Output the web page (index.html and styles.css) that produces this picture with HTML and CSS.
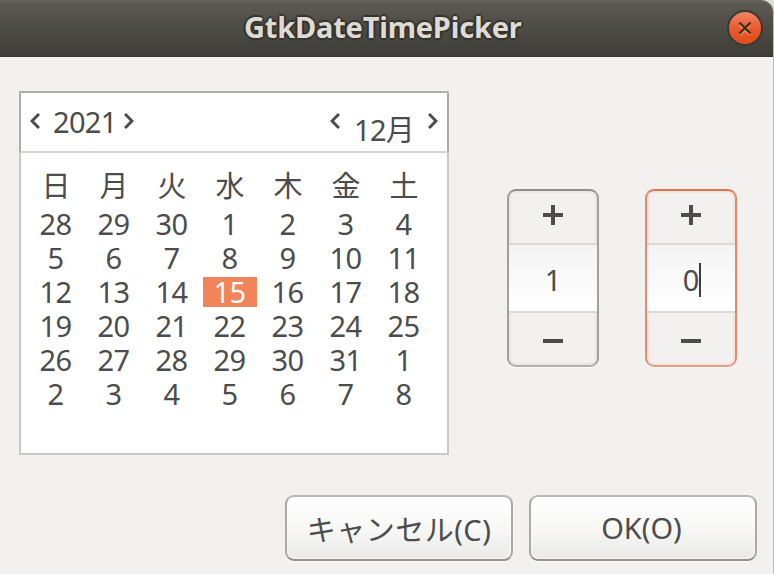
FILE: index.html
```html
<!DOCTYPE html>
<html lang="ja">
<head>
<meta charset="utf-8">
<title>GtkDateTimePicker</title>
<link rel="stylesheet" href="styles.css">
</head>
<body>
<div class="window">
  <header class="titlebar">
    <h1 class="title">GtkDateTimePicker</h1>
    <button class="close" aria-label="閉じる"><svg width="14" height="14" viewBox="0 0 14 14"><path class="close-glow" d="M2 4.5 12 14M12 4.5 2 14"/><path class="close-mark" d="M1.5 1.5 12.5 12.5M12.5 1.5 1.5 12.5"/></svg></button>
  </header>
  <main class="content">
    <section class="calendar">
      <div class="cal-header">
        <svg class="arrow" width="10" height="16" viewBox="0 0 10 16"><path d="M9 1 2 8 9 15"/></svg>
        <span class="year">2021</span>
        <svg class="arrow" width="10" height="16" viewBox="0 0 10 16"><path d="M1 1 8 8 1 15"/></svg>
        <svg class="arrow month-prev" width="10" height="16" viewBox="0 0 10 16"><path d="M9 1 2 8 9 15"/></svg>
        <span class="month">12月</span>
        <svg class="arrow" width="10" height="16" viewBox="0 0 10 16"><path d="M1 1 8 8 1 15"/></svg>
      </div>
      <div class="weekdays"><span>日</span><span>月</span><span>火</span><span>水</span><span>木</span><span>金</span><span>土</span></div>
      <div class="days">
        <span>28</span><span>29</span><span>30</span><span>1</span><span>2</span><span>3</span><span>4</span>
        <span>5</span><span>6</span><span>7</span><span>8</span><span>9</span><span>10</span><span>11</span>
        <span>12</span><span>13</span><span>14</span><span class="selected">15</span><span>16</span><span>17</span><span>18</span>
        <span>19</span><span>20</span><span>21</span><span>22</span><span>23</span><span>24</span><span>25</span>
        <span>26</span><span>27</span><span>28</span><span>29</span><span>30</span><span>31</span><span>1</span>
        <span>2</span><span>3</span><span>4</span><span>5</span><span>6</span><span>7</span><span>8</span>
      </div>
    </section>
    <div class="spinners">
      <div class="spin">
        <div class="step"><svg width="20" height="20" viewBox="0 0 20 20"><path d="M0 8h8V0h4v8h8v4h-8v8H8v-8H0z"/></svg></div>
        <div class="value">1</div>
        <div class="step"><svg width="20" height="20" viewBox="0 0 20 20"><path d="M0 8h20v4H0z"/></svg></div>
      </div>
      <div class="spin focused">
        <div class="step"><svg width="20" height="20" viewBox="0 0 20 20"><path d="M0 8h8V0h4v8h8v4h-8v8H8v-8H0z"/></svg></div>
        <div class="value">0<i class="caret"></i></div>
        <div class="step"><svg width="20" height="20" viewBox="0 0 20 20"><path d="M0 8h20v4H0z"/></svg></div>
      </div>
    </div>
  </main>
  <footer class="actions">
    <button class="btn btn-cancel"><span>キャンセル(C)</span></button>
    <button class="btn btn-ok"><span>OK(O)</span></button>
  </footer>
</div>
</body>
</html>
```
FILE: styles.css
```css
* { box-sizing: border-box; }

body {
  margin: 0;
  background: #dedddc;
  color: #4c4c4c;
  font: 29px/34px "Noto Sans", "Noto Sans CJK JP", sans-serif;
  overflow: hidden;
}

button { font: inherit; color: inherit; padding: 0; }

.window {
  width: 774px;
  height: 574px;
  display: flex;
  flex-direction: column;
  background: #f2f1ef;
  border-right: 1px solid #bdbcbb;
  border-top-right-radius: 12px;
}

.titlebar {
  height: 57px;
  flex: none;
  display: flex;
  align-items: center;
  justify-content: flex-end;
  padding: 0 11px 2px 0;
  background: linear-gradient(#5d5a51, #4c4b44 50%, #3e3d38);
  border-top: 2px solid #64625a;
  border-bottom: 1px solid #3a3935;
  border-top-right-radius: 12px;
}

.title {
  margin: -2px 205px 0 0;
  width: 278px;
  white-space: nowrap;
  font-size: 29px;
  line-height: 34px;
  font-weight: 700;
  letter-spacing: -0.2px;
  color: #dfdbd2;
  text-shadow: 0 -2px 1px #333330, 0 2px 1px #333330, 2px 0 1px #333330, -2px 0 1px #333330;
}

.close {
  width: 36px;
  height: 36px;
  margin-right: -1px;
  display: flex;
  align-items: center;
  justify-content: center;
  border: 2px solid #3b3935;
  border-radius: 50%;
  background: linear-gradient(#f38765, #e9592c 52%, #e04d18);
}

.close path { fill: none; stroke-width: 2.2; }
.close .close-glow { stroke: #ef8b64; }
.close .close-mark { stroke: #3c2d13; }

.content {
  height: 438px;
  flex: none;
  display: flex;
  align-items: flex-start;
  padding: 34px 0 0 19px;
}

.calendar {
  width: 430px;
  height: 364px;
  background: #fff;
  border: 2px solid #c9c8c6;
  border-top-color: #aeaca9;
}

.cal-header {
  height: 60px;
  margin: 0 -2px;
  display: flex;
  align-items: flex-start;
  padding: 20px 9px 0;
  border: 2px solid #aeaca9;
  border-top: 0;
  border-bottom-color: #d2d2d0;
}

.arrow { flex: none; fill: none; stroke: #4c4c4c; stroke-width: 3; stroke-linecap: butt; }
.year { width: 65px; margin: -8px 6px 0 13px; }
.month { width: 58px; margin: 0 16px 0 14px; white-space: nowrap; }
.month-prev { margin-left: auto; }

.year, .month, .days { letter-spacing: -0.7px; }

.weekdays, .days {
  display: grid;
  grid-template-columns: repeat(7, 58px);
  margin-left: 6px;
  text-align: center;
}

.weekdays { padding: 16px 0 4px; }
.days span { height: 34px; padding-right: 1px; }

.days .selected {
  height: 30px;
  line-height: 30px;
  margin: 2px;
  background: #f28459;
  color: #fff;
}

.spinners { display: flex; gap: 46px; padding: 98px 0 0 58px; }

.spin {
  width: 92px;
  height: 178px;
  border: 2px solid #a09f9d;
  border-top-color: #8f8e8b;
  border-bottom-color: #b0afad;
  border-radius: 9px;
  box-shadow: inset 0 0 0 2px #e9e8e6, 0 1px 1px #fbfbfa;
  display: grid;
  grid-template-rows: 52px 70px 52px;
}

.focused {
  border-color: #e58a6b;
  border-top-color: #df7651;
  border-bottom-color: #e79d83;
  box-shadow: inset 0 0 0 2px #f1e5e0, 0 1px 1px #fbfbfa;
}

.step { display: flex; align-items: center; justify-content: center; }
.step svg { fill: #4c4c4c; }
.step:first-child { padding-bottom: 4px; }
.step:last-child { padding-top: 3px; }

.value {
  display: flex;
  align-items: center;
  justify-content: center;
  padding-top: 4px;
  position: relative;
  border: solid #dad9d8;
  border-width: 2px 0;
  background: linear-gradient(#f4f4f4, #fff);
}

.caret {
  position: absolute;
  left: 52px;
  top: 18px;
  width: 2px;
  height: 34px;
  background: #3c3c3c;
}

.actions { display: flex; gap: 16px; padding-left: 285px; }

.btn {
  width: 228px;
  height: 66px;
  border: 2px solid #aaa9a7;
  border-top-color: #b8b7b5;
  border-bottom-color: #92918f;
  border-radius: 9px;
  background: linear-gradient(#fff, #f8f8f7 50%, #eae9e8);
  box-shadow: inset 0 0 2px 1px rgba(255, 255, 255, .6), 0 1px 1px #fbfbfa;
}

.btn span { display: inline-block; white-space: nowrap; }
.btn-cancel { padding-top: 4px; letter-spacing: 0.5px; }
.btn-ok { padding-right: 3px; }
```
